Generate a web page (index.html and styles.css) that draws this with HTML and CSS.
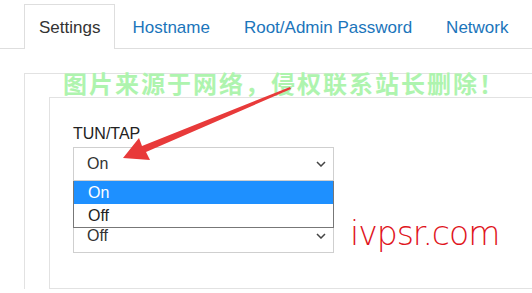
FILE: index.html
```html
<!DOCTYPE html>
<html>
<head>
<meta charset="utf-8">
<link rel="stylesheet" href="styles.css">
</head>
<body>
<div class="page">
  <ul class="tabs">
    <li class="tab active">Settings</li>
    <li class="tab">Hostname</li>
    <li class="tab">Root/Admin Password</li>
    <li class="tab">Network</li>
  </ul>
  <div class="outer">
    <div class="inner">
      <label class="label">TUN/TAP</label>
      <div class="field">
        <div class="select">
          <span>On</span>
          <svg class="chev" width="10" height="6" viewBox="0 0 10 6"><path d="M1 1 L5 5 L9 1" fill="none" stroke="#444" stroke-width="1.5"/></svg>
        </div>
        <div class="dropdown">
          <div class="opt selected">On</div>
          <div class="opt">Off</div>
        </div>
      </div>
      <div class="select second">
        <span>Off</span>
        <svg class="chev" width="10" height="6" viewBox="0 0 10 6"><path d="M1 1 L5 5 L9 1" fill="none" stroke="#444" stroke-width="1.5"/></svg>
      </div>
    </div>
  </div>
  <div class="watermark">图片来源于网络，侵权联系站长删除！</div>
  <svg class="arrow" width="532" height="293" viewBox="0 0 532 293">
    <path d="M290 87 L291 89 L146 152 L150 160 L123 158 L139 138 L142 146 Z" fill="#e83a3a"/>
  </svg>
  <div class="brand">ivpsr.com</div>
</div>
</body>
</html>
```
FILE: styles.css
```css
html, body {
  margin: 0;
  padding: 0;
  background: #fff;
}
.page {
  position: relative;
  width: 532px;
  height: 293px;
  overflow: hidden;
  font-family: "Liberation Sans", Arial, sans-serif;
}
.tabs {
  list-style: none;
  margin: 0;
  padding: 4px 0 0 24px;
  display: flex;
  border-bottom: 1px solid #dedede;
  height: 44px;
}
.tab {
  box-sizing: border-box;
  height: 45px;
  padding: 0 16px;
  line-height: 45px;
  font-size: 17px;
  color: #1b75bb;
  border: 1px solid transparent;
  border-bottom: none;
}
.tab.active {
  color: #333;
  padding: 0 14px;
  background: #fff;
  border-color: #dedede;
}
.outer {
  margin: 24px 0 0 24px;
  border-top: 1px solid #e2e2e2;
  border-left: 1px solid #e2e2e2;
  padding: 23px 0 0 24px;
}
.inner {
  border: 1px solid #e2e2e2;
  border-right: none;
  padding: 27px 0 35px 23px;
}
.label {
  display: block;
  font-size: 16px;
  line-height: 18px;
  color: #222;
  margin-bottom: 4px;
}
.field {
  position: relative;
  width: 261px;
}
.select {
  box-sizing: border-box;
  width: 261px;
  height: 34px;
  border: 1px solid #cfcfcf;
  display: flex;
  align-items: center;
  justify-content: space-between;
  padding: 0 7px 0 13px;
  font-size: 16px;
  color: #333;
  background: #fff;
}
.second {
  margin-top: 38px;
}
.dropdown {
  position: absolute;
  left: 0;
  top: 34px;
  width: 261px;
  box-sizing: border-box;
  background: #fff;
  border: 1px solid #777;
  border-top: none;
  z-index: 2;
}
.opt {
  height: 23px;
  line-height: 23px;
  padding-left: 14px;
  font-size: 16px;
  color: #222;
}
.opt.selected {
  background: #1e90ff;
  color: #fff;
}
.watermark {
  position: absolute;
  left: 63px;
  top: 68px;
  font-family: "Noto Sans CJK SC", sans-serif;
  font-weight: 700;
  font-size: 24px;
  letter-spacing: 2px;
  line-height: 30px;
  color: #aef4ae;
  white-space: nowrap;
}
.arrow {
  position: absolute;
  left: 0;
  top: 0;
}
.brand {
  position: absolute;
  left: 350px;
  top: 214px;
  font-family: "DejaVu Sans", sans-serif;
  font-weight: 200;
  font-size: 33px;
  line-height: 40px;
  color: #e0141c;
  letter-spacing: -1px;
}
```
